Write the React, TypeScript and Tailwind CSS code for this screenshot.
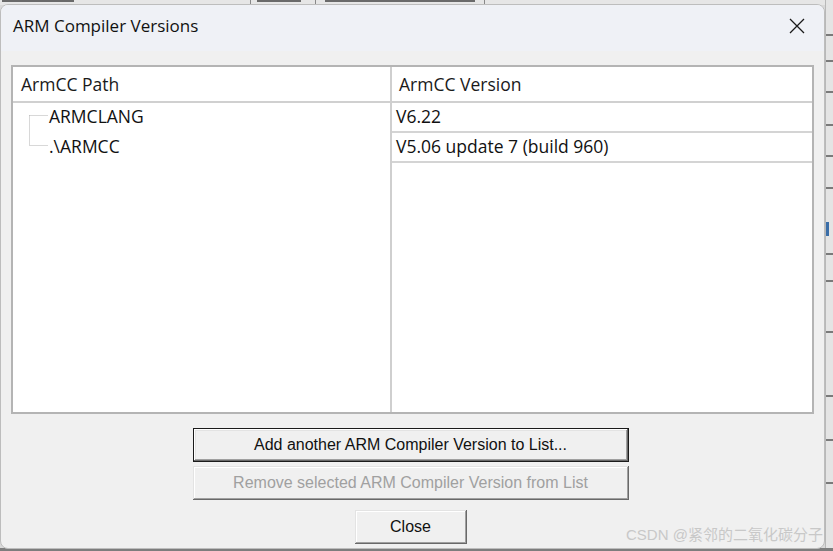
import React from "react";

const ui = { fontFamily: '"Open Sans", "Noto Sans", sans-serif' };
const btn = { fontFamily: '"Liberation Sans", Arial, sans-serif' };

function Button({
  label,
  w,
  disabled,
  isDefault,
}: {
  label: string;
  w: string;
  disabled?: boolean;
  isDefault?: boolean;
}) {
  const base =
    "h-[34px] flex items-center justify-center text-[16px] bg-[#f0f0f0] " +
    w;
  const bevel = isDefault
    ? " border border-[#1a1a1a] shadow-[inset_-1px_-1px_#696969,inset_1px_1px_#ffffff,inset_-2px_-2px_#a0a0a0,inset_2px_2px_#e3e3e3]"
    : " shadow-[inset_-1px_-1px_#696969,inset_1px_1px_#e3e3e3,inset_-2px_-2px_#a0a0a0,inset_2px_2px_#ffffff]";
  return (
    <div
      className={base + bevel + (disabled ? " text-[#a0a0a0]" : " text-[#111]")}
      style={btn}
    >
      {label}
    </div>
  );
}

export default function App() {
  const stripLines = [34, 60, 91, 124, 155, 187, 253, 280, 331, 395, 439, 482];
  return (
    <div className="relative w-[833px] h-[551px] overflow-hidden bg-[#d9d9d9]">
      {/* background app: top strip */}
      <div className="absolute left-0 top-0 w-[833px] h-[5px] bg-[#e6e6e6] flex items-start">
        <div className="ml-[2px] w-[72px] h-[2px] bg-[#6a6a6a]" />
        <div className="ml-[176px] w-[1px] h-[5px] bg-[#888]" />
        <div className="ml-[6px] w-[44px] h-[2px] bg-[#6a6a6a]" />
        <div className="ml-[14px] w-[1px] h-[5px] bg-[#888]" />
        <div className="ml-[9px] w-[150px] h-[2px] bg-[#6a6a6a]" />
        <div className="ml-[9px] w-[1px] h-[5px] bg-[#888]" />
      </div>
      {/* background app: right strip */}
      <div className="absolute left-[825px] top-0 w-[8px] h-[551px] bg-[#e4e4e4] border-l border-[#b8b8b8]">
        {stripLines.map((y) => (
          <div
            key={y}
            className="absolute left-0 w-[8px] h-[2px] bg-[#7a7a7a]"
            style={{ top: y }}
          />
        ))}
        <div className="absolute left-0 top-[222px] w-[3px] h-[14px] bg-[#3b6ea8]" />
      </div>
      {/* bottom shadow */}
      <div className="absolute left-0 top-[548px] w-[833px] h-[3px] bg-[#7d7d7d]" />

      {/* dialog window */}
      <div
        className="absolute left-0 top-[4px] w-[825px] h-[545px] flex flex-col bg-[#f0f0f0] rounded-[8px] border border-[#bdbdbd] overflow-hidden"
        style={ui}
      >
        {/* title bar */}
        <div className="h-[46px] shrink-0 bg-[#eff1f6] flex items-center justify-between pl-[12px] pr-[19px]">
          <span className="text-[17px] text-[#111] leading-none mb-[5px]">
            ARM Compiler Versions
          </span>
          <svg width="16" height="16" viewBox="0 0 16 16" className="mb-[5px]">
            <path d="M1 1 L15 15 M15 1 L1 15" stroke="#1a1a1a" strokeWidth="1.3" />
          </svg>
        </div>

        {/* body */}
        <div className="flex-1 flex flex-col px-[10px] pt-[14px]">
          <div className="h-[349px] border-2 border-[#b4b4b4] bg-white grid grid-cols-[377px_1fr]">
            {/* left column */}
            <div className="flex flex-col">
              <div className="h-[36px] border-b-2 border-[#d0d0d0] flex items-center pl-[8px] text-[17.5px] text-[#1a1a1a]">
                ArmCC Path
              </div>
              <div className="relative flex flex-col text-[17.5px] text-[#111]">
                <svg
                  className="absolute left-[16px] top-[12px]"
                  width="20"
                  height="32"
                  viewBox="0 0 20 32"
                >
                  <path
                    d="M0.5 0.5 V30.5 M0.5 0.5 H19 M0.5 30.5 H19"
                    stroke="#b0b0b0"
                    strokeWidth="1"
                    strokeDasharray="1 1"
                    fill="none"
                  />
                </svg>
                <div className="h-[30px] flex items-center pl-[36px] pb-[4px]">ARMCLANG</div>
                <div className="h-[30px] flex items-center pl-[36px] pb-[4px]">.\ARMCC</div>
              </div>
            </div>
            {/* right column */}
            <div className="flex flex-col border-l-2 border-[#cfcfcf]">
              <div className="h-[36px] border-b-2 border-[#d0d0d0] flex items-center pl-[7px] text-[17.5px] text-[#1a1a1a]">
                ArmCC Version
              </div>
              <div className="h-[30px] border-b-2 border-[#d4d4d4] flex items-center pl-[4px] pb-[2px] text-[17.5px] text-[#111]">
                V6.22
              </div>
              <div className="h-[30px] border-b-2 border-[#d4d4d4] flex items-center pl-[4px] pb-[2px] text-[17.5px] text-[#111]">
                V5.06 update 7 (build 960)
              </div>
            </div>
          </div>

          <div className="flex flex-col items-center mt-[14px] pr-[4px]">
            <Button label="Add another ARM Compiler Version to List..." w="w-[436px]" isDefault />
            <div className="h-[4px]" />
            <Button
              label="Remove selected ARM Compiler Version from List"
              w="w-[436px]"
              disabled
            />
            <div className="h-[10px]" />
            <Button label="Close" w="w-[112px]" />
          </div>
        </div>

        {/* watermark */}
        <div
          className="absolute left-[625px] top-[519px] text-[15px] text-[#c8c8c8] whitespace-nowrap"
          style={{ fontFamily: '"Liberation Sans", "Noto Sans CJK SC", sans-serif' }}
        >
          CSDN @紧邻的二氧化碳分子
        </div>
      </div>
    </div>
  );
}
